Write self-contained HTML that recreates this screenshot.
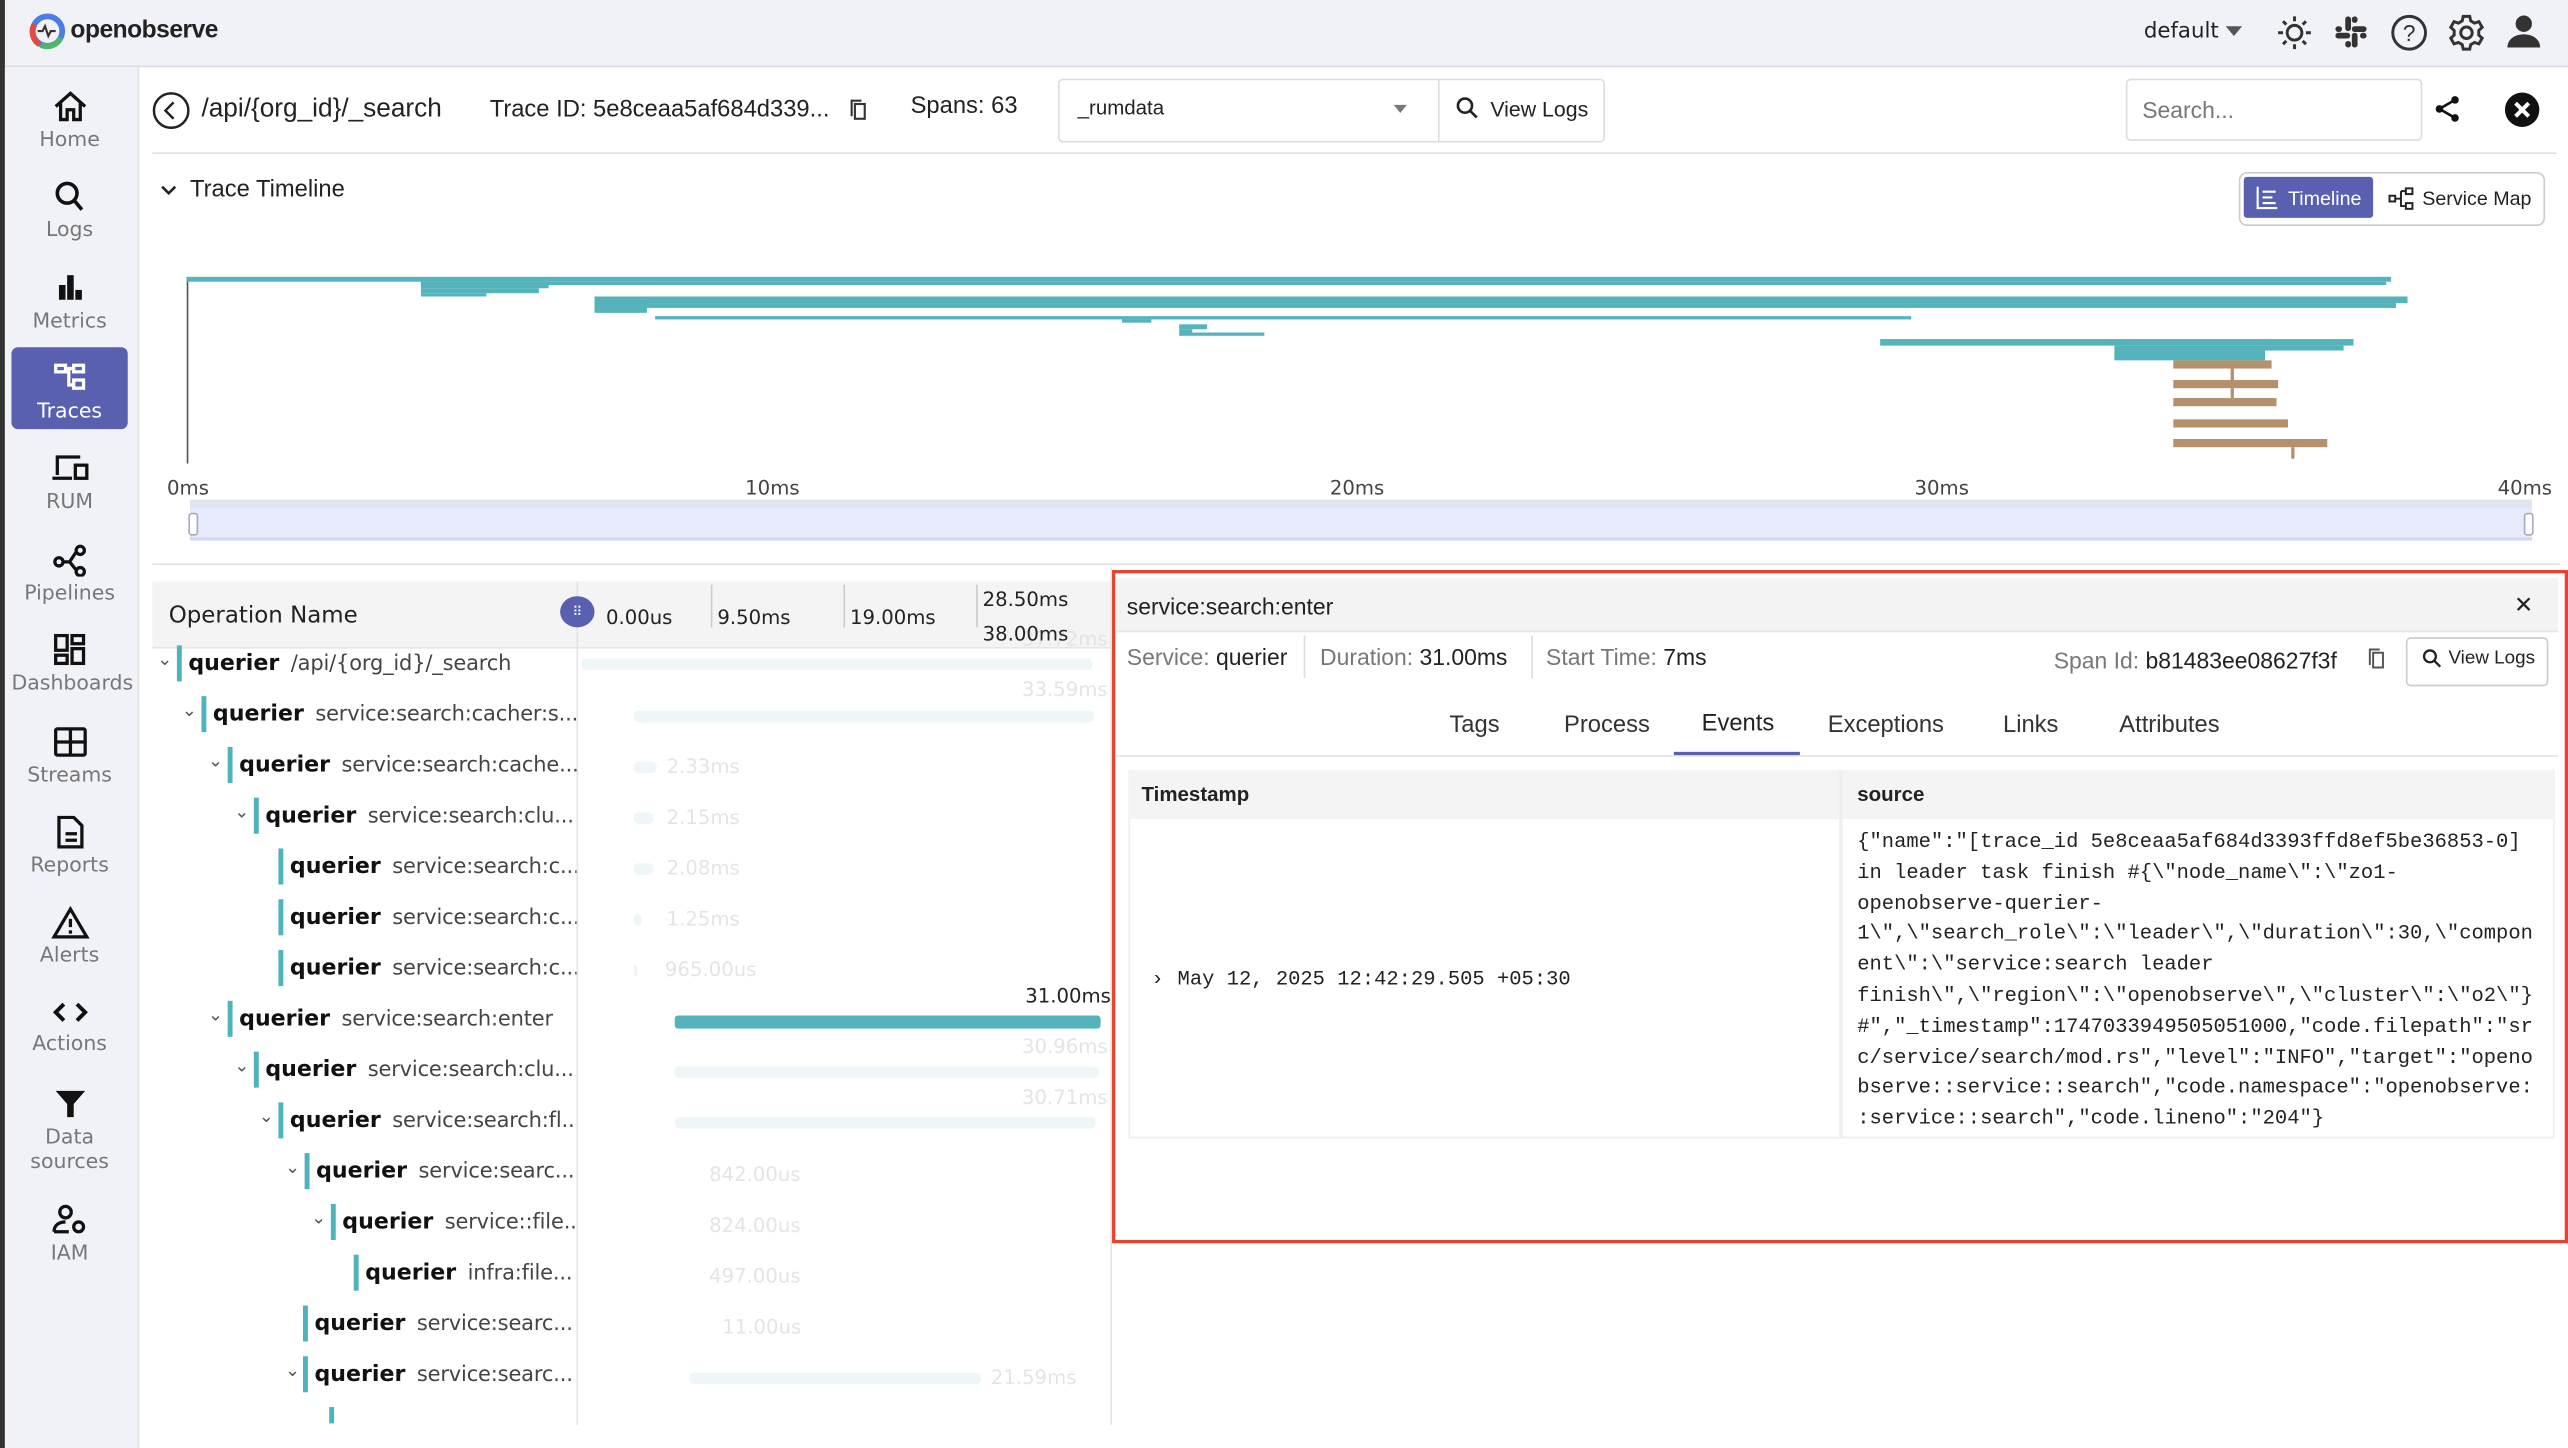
<!DOCTYPE html>
<html><head><meta charset="utf-8">
<style>
html,body{margin:0;padding:0;width:2568px;height:1448px;overflow:hidden;background:#fff}
#s{position:absolute;left:0;top:0;width:1568px;height:884px;transform:scale(1.63776,1.638);transform-origin:0 0;font-family:"Liberation Sans","DejaVu Sans",sans-serif;color:#222;background:#fff;overflow:hidden}
.a{position:absolute}
.nav{position:absolute;left:7px;width:71px;text-align:center;font-size:12.5px;color:#777;font-family:"DejaVu Sans",sans-serif}
.nav svg{display:block;margin:0 auto 2px}
.row{position:absolute;left:0;height:31px;font-size:14.5px;white-space:nowrap;overflow:hidden}
.row .b{position:absolute;top:4px;width:3px;height:22px;background:#4fb3bc}
.row .c{position:absolute;top:6px;font-size:11px;color:#555}
.row .t{position:absolute;top:7px}
.row .t b{color:#111;margin-right:7px;font-family:"DejaVu Sans",sans-serif;font-size:13.5px}
.row .t span{color:#444;font-family:"DejaVu Sans",sans-serif;font-size:12.8px;letter-spacing:-.1px}
.fb{position:absolute;height:7px;background:#eef6f7;border-radius:3px}
.fl{position:absolute;font-size:12px;color:#e4e4e4;font-family:"DejaVu Sans",sans-serif}
.g{position:absolute;background:#55b4bb}
.br{position:absolute;background:#b5906c}
</style></head><body><div id="s">
<div class="a" style="left:0;top:0;width:1568px;height:40px;background:#f1f2f7;border-bottom:1px solid #dcdde3"></div>
<div class="a" style="left:0;top:0;width:3px;height:884px;background:#333"></div>
<svg class="a" style="left:18px;top:8px" width="22" height="22" viewBox="0 0 22 22"><circle cx="11" cy="11" r="9" fill="none" stroke="#4a7de8" stroke-width="3.5"/><path d="M3 7 A9 9 0 0 0 6 19" stroke="#e54b3c" stroke-width="3.5" fill="none"/><path d="M7 19.5 A9 9 0 0 0 19 15" stroke="#4cb86a" stroke-width="3.5" fill="none"/><path d="M5 11h3l1.5-3 2 6 1.5-3h3" stroke="#333" stroke-width="1.3" fill="none"/></svg>
<div class="a" style="left:43px;top:10px;font-size:15px;font-weight:bold;color:#222;letter-spacing:-.3px">openobserve</div>
<div class="a" style="left:1309px;top:12px;font-size:13px;color:#222;font-family:'DejaVu Sans',sans-serif">default</div>
<div class="a" style="left:1359px;top:16px;width:0;height:0;border-left:5px solid transparent;border-right:5px solid transparent;border-top:6px solid #555"></div>
<svg class="a" style="left:1389px;top:8px" width="24" height="24" viewBox="0 0 24 24" stroke="#333" stroke-width="1.8" fill="none"><circle cx="12" cy="12" r="4.5"/><path d="M12 2v3M12 19v3M2 12h3M19 12h3M5 5l2 2M17 17l2 2M5 19l2-2M17 7l2-2"/></svg>
<svg class="a" style="left:1425px;top:9px" width="21" height="21" viewBox="0 0 21 21" fill="#333"><rect x="7" y="1" width="3.5" height="9" rx="1.7"/><rect x="11" y="11" width="3.5" height="9" rx="1.7"/><rect x="1" y="11" width="9" height="3.5" rx="1.7"/><rect x="11" y="7" width="9" height="3.5" rx="1.7"/><rect x="1" y="7" width="4" height="3.5" rx="1.7"/><rect x="16" y="11" width="4" height="3.5" rx="1.7"/><rect x="11" y="1" width="3.5" height="4" rx="1.7"/><rect x="7" y="16" width="3.5" height="4" rx="1.7"/></svg>
<svg class="a" style="left:1459px;top:8px" width="24" height="24" viewBox="0 0 24 24"><circle cx="12" cy="12" r="10" fill="none" stroke="#333" stroke-width="1.8"/><text x="12" y="17" text-anchor="middle" font-size="14" font-family="Liberation Sans" fill="#333">?</text></svg>
<svg class="a" style="left:1494px;top:8px" width="24" height="24" viewBox="0 0 24 24" fill="none" stroke="#333" stroke-width="1.8"><circle cx="12" cy="12" r="3.5"/><path d="M10 2h4l.6 2.8 2.3 1.3 2.7-.9 2 3.5-2.1 1.9v2.8l2.1 1.9-2 3.5-2.7-.9-2.3 1.3L14 22h-4l-.6-2.8-2.3-1.3-2.7.9-2-3.5 2.1-1.9V10.6L2.4 8.7l2-3.5 2.7.9 2.3-1.3z"/></svg>
<svg class="a" style="left:1530px;top:8px" width="22" height="22" viewBox="0 0 22 22" fill="#333"><circle cx="11" cy="6.5" r="5"/><path d="M1 21c0-5 4.5-8 10-8s10 3 10 8z"/></svg>
<div class="a" style="left:3px;top:41px;width:81px;height:843px;background:#f1f2f7;border-right:1px solid #e0e1e6"></div>
<div class="a" style="left:7px;top:212px;width:71px;height:50px;background:#5960b0;border-radius:4px"></div>
<div class="nav" style="top:55px"><svg width="22" height="20" viewBox="0 0 22 20" fill="none" stroke="#111" stroke-width="2"><path d="M2 10L11 2l9 8M5 8v10h4v-6h4v6h4V8"/></svg>Home</div>
<div class="nav" style="top:110px"><svg width="22" height="20" viewBox="0 0 22 20" fill="none" stroke="#111" stroke-width="2.2"><circle cx="9" cy="8" r="6"/><path d="M13 12l5 6"/></svg>Logs</div>
<div class="nav" style="top:166px"><svg width="22" height="20" viewBox="0 0 22 20" fill="#111"><rect x="4" y="8" width="4" height="9"/><rect x="9" y="2" width="4" height="15"/><rect x="14" y="11" width="4" height="6"/></svg>Metrics</div>
<div class="nav" style="top:221px;color:#fff"><svg width="22" height="20" viewBox="0 0 22 20" fill="none" stroke="#fff" stroke-width="2"><rect x="2" y="2" width="6" height="4"/><rect x="13" y="2" width="6" height="4"/><rect x="13" y="11" width="6" height="5"/><path d="M8 4h5M10 4v10h3"/></svg>Traces</div>
<div class="nav" style="top:276px"><svg width="26" height="20" viewBox="0 0 26 20" fill="none" stroke="#111" stroke-width="2"><path d="M5 14V3h14M2 16h12"/><rect x="16" y="8" width="7" height="8"/></svg>RUM</div>
<div class="nav" style="top:332px"><svg width="24" height="20" viewBox="0 0 24 20" fill="none" stroke="#111" stroke-width="2"><circle cx="5" cy="11" r="2.5"/><circle cx="18" cy="4" r="2.5"/><circle cx="18" cy="17" r="2.5"/><path d="M7.5 11h4l4-6M11.5 11l4 5"/></svg>Pipelines</div>
<div class="nav" style="top:387px"><svg width="22" height="20" viewBox="0 0 22 20" fill="none" stroke="#111" stroke-width="2"><rect x="2" y="1" width="7" height="9"/><rect x="12" y="1" width="7" height="5"/><rect x="2" y="13" width="7" height="5"/><rect x="12" y="9" width="7" height="9"/></svg>Dashboards</div>
<div class="nav" style="top:443px"><svg width="22" height="20" viewBox="0 0 22 20" fill="none" stroke="#111" stroke-width="2"><rect x="2" y="2" width="18" height="16" rx="1"/><path d="M11 2v16M2 10h18"/></svg>Streams</div>
<div class="nav" style="top:498px"><svg width="22" height="20" viewBox="0 0 22 20" fill="none" stroke="#111" stroke-width="2"><path d="M4 1h9l5 5v13H4z"/><path d="M8 11h7M8 15h7"/></svg>Reports</div>
<div class="nav" style="top:553px"><svg width="24" height="20" viewBox="0 0 24 20" fill="none" stroke="#111" stroke-width="2"><path d="M12 2L2 19h20z"/><path d="M12 8v5M12 15v2"/></svg>Alerts</div>
<div class="nav" style="top:609px"><svg width="24" height="18" viewBox="0 0 24 18" fill="none" stroke="#111" stroke-width="2.4"><path d="M8 4L3 9l5 5M16 4l5 5-5 5"/></svg>Actions</div>
<div class="nav" style="top:664px;line-height:15px"><svg width="22" height="20" viewBox="0 0 22 20" fill="#111"><path d="M2 2h18l-7 8v8h-4v-8z"/></svg>Data<br>sources</div>
<div class="nav" style="top:735px"><svg width="24" height="20" viewBox="0 0 24 20" fill="none" stroke="#111" stroke-width="2"><circle cx="9" cy="5" r="3.5"/><path d="M2 17c0-4 3-6 7-6M2 17h9"/><circle cx="17" cy="14" r="3"/></svg>IAM</div>
<svg class="a" style="left:93px;top:56px" width="23" height="23" viewBox="0 0 23 23" fill="none" stroke="#222" stroke-width="1.5"><circle cx="11.5" cy="11.5" r="10.5"/><path d="M13 6.5l-5 5 5 5"/></svg>
<div class="a" style="left:123px;top:58px;font-size:16px;color:#222">/api/{org_id}/_search</div>
<div class="a" style="left:299px;top:59px;font-size:14.5px;color:#222">Trace ID: 5e8ceaa5af684d339...</div>
<svg class="a" style="left:518px;top:60px" width="12" height="14" viewBox="0 0 12 14" fill="none" stroke="#333" stroke-width="1.3"><rect x="4" y="3.5" width="6" height="9"/><path d="M2 11V1.5h6"/></svg>
<div class="a" style="left:556px;top:57px;font-size:14.5px;color:#222">Spans: 63</div>
<div class="a" style="left:646px;top:48px;width:332px;height:37px;border:1px solid #ddd;border-radius:3px"></div>
<div class="a" style="left:878px;top:48px;width:1px;height:39px;background:#ddd"></div>
<div class="a" style="left:658px;top:59px;font-size:12.5px;color:#222">_rumdata</div>
<div class="a" style="left:851px;top:64px;width:0;height:0;border-left:4.5px solid transparent;border-right:4.5px solid transparent;border-top:5px solid #777"></div>
<svg class="a" style="left:889px;top:59px" width="14" height="14" viewBox="0 0 14 14" fill="none" stroke="#222" stroke-width="1.6"><circle cx="5.5" cy="5.5" r="4.3"/><path d="M8.7 8.7l4 4"/></svg>
<div class="a" style="left:910px;top:59px;font-size:13px;color:#222">View Logs</div>
<div class="a" style="left:1298px;top:48px;width:179px;height:36px;border:1px solid #ddd;border-radius:3px"></div>
<div class="a" style="left:1308px;top:59px;font-size:14px;color:#777">Search...</div>
<svg class="a" style="left:1486px;top:58px" width="17" height="17" viewBox="0 0 17 17" fill="#111"><circle cx="13" cy="3" r="2.3"/><circle cx="3.5" cy="8.5" r="2.3"/><circle cx="13" cy="14" r="2.3"/><path d="M3.5 8.5L13 3M3.5 8.5L13 14" stroke="#111" stroke-width="1.6"/></svg>
<svg class="a" style="left:1529px;top:56px" width="22" height="22" viewBox="0 0 22 22"><circle cx="11" cy="11" r="10.5" fill="#111"/><path d="M7 7l8 8M15 7l-8 8" stroke="#fff" stroke-width="2.4"/></svg>
<div class="a" style="left:93px;top:93px;width:1468px;height:1px;background:#e2e2e2"></div>
<svg class="a" style="left:97px;top:111px" width="12" height="10" viewBox="0 0 12 10" fill="none" stroke="#222" stroke-width="1.6"><path d="M2 3l4 4 4-4"/></svg>
<div class="a" style="left:116px;top:108px;font-size:14.5px;color:#222">Trace Timeline</div>
<div class="a" style="left:1367px;top:105px;width:185px;height:31px;border:1px solid #ccc;border-radius:5px"></div>
<div class="a" style="left:1370px;top:108px;width:79px;height:25px;background:#5960b0;border-radius:2px"></div>
<svg class="a" style="left:1377px;top:113px" width="15" height="15" viewBox="0 0 15 15" fill="none" stroke="#fff" stroke-width="1.3"><path d="M1.5 1v13h12M4.5 4h8M4.5 7.5h6M4.5 11h8"/></svg>
<div class="a" style="left:1397px;top:114px;font-size:12px;color:#fff">Timeline</div>
<svg class="a" style="left:1458px;top:114px" width="17" height="15" viewBox="0 0 17 15" fill="none" stroke="#222" stroke-width="1.2"><rect x="1" y="5.5" width="3.5" height="3.5"/><rect x="11" y="1" width="4" height="3.5"/><rect x="11" y="10" width="4" height="3.5"/><path d="M4.5 7.3h3.5M8 2.7v9.5M8 2.7h3M8 11.8h3"/></svg>
<div class="a" style="left:1479px;top:114px;font-size:12px;color:#222">Service Map</div>
<div class="a" style="left:114px;top:169px;width:1px;height:114px;background:#555"></div>
<div class="g" style="left:114px;top:169px;width:1346px;height:3px"></div>
<div class="g" style="left:257px;top:172px;width:1200px;height:2px"></div>
<div class="g" style="left:257px;top:172px;width:78px;height:4px"></div>
<div class="g" style="left:257px;top:176px;width:72px;height:3px"></div>
<div class="g" style="left:257px;top:179px;width:40px;height:2px"></div>
<div class="g" style="left:363px;top:181px;width:1107px;height:4px"></div>
<div class="g" style="left:363px;top:185px;width:1100px;height:3px"></div>
<div class="g" style="left:363px;top:185px;width:32px;height:6px"></div>
<div class="g" style="left:400px;top:193px;width:767px;height:2px"></div>
<div class="g" style="left:685px;top:195px;width:18px;height:2px"></div>
<div class="g" style="left:720px;top:198px;width:17px;height:3px"></div>
<div class="g" style="left:720px;top:201px;width:8px;height:2px"></div>
<div class="g" style="left:720px;top:203px;width:52px;height:2px"></div>
<div class="g" style="left:1148px;top:207px;width:289px;height:4px"></div>
<div class="g" style="left:1291px;top:211px;width:140px;height:3px"></div>
<div class="g" style="left:1291px;top:214px;width:92px;height:6px"></div>
<div class="br" style="left:1327px;top:220px;width:60px;height:5px"></div>
<div class="br" style="left:1362px;top:225px;width:2px;height:7px"></div>
<div class="br" style="left:1327px;top:232px;width:64px;height:5px"></div>
<div class="br" style="left:1362px;top:237px;width:2px;height:6px"></div>
<div class="br" style="left:1327px;top:243px;width:63px;height:5px"></div>
<div class="br" style="left:1327px;top:256px;width:70px;height:5px"></div>
<div class="br" style="left:1327px;top:268px;width:94px;height:5px"></div>
<div class="br" style="left:1399px;top:273px;width:2px;height:7px"></div>
<div class="a" style="left:102px;top:291px;font-size:12px;color:#444;font-family:'DejaVu Sans',sans-serif">0ms</div>
<div class="a" style="left:455px;top:291px;font-size:12px;color:#444;font-family:'DejaVu Sans',sans-serif">10ms</div>
<div class="a" style="left:812px;top:291px;font-size:12px;color:#444;font-family:'DejaVu Sans',sans-serif">20ms</div>
<div class="a" style="left:1169px;top:291px;font-size:12px;color:#444;font-family:'DejaVu Sans',sans-serif">30ms</div>
<div class="a" style="left:1525px;top:291px;font-size:12px;color:#444;font-family:'DejaVu Sans',sans-serif">40ms</div>
<div class="a" style="left:116px;top:305px;width:1430px;height:25px;background:#e6eafb;border-top:5px solid #e0e4ef;box-sizing:border-box;border-bottom:2px solid #d4d9f3"></div>
<div class="a" style="left:115px;top:313px;width:4px;height:12px;border:1px solid #aab;border-radius:2px;background:#fff"></div>
<div class="a" style="left:1541px;top:313px;width:4px;height:12px;border:1px solid #aab;border-radius:2px;background:#fff"></div>
<div class="a" style="left:93px;top:344px;width:1470px;height:1px;background:#e2e2e2"></div>
<div class="a" style="left:93px;top:355px;width:587px;height:40px;background:#f4f4f4;border-bottom:1px solid #e6e6e6"></div>
<div class="a" style="left:352px;top:355px;width:1px;height:515px;background:#e4e4e4"></div>
<div class="a" style="left:103px;top:368px;font-size:14px;color:#222;font-family:'DejaVu Sans',sans-serif">Operation Name</div>
<div class="a" style="left:342px;top:364px;width:21px;height:19px;border-radius:50%;background:#5960b0;color:#fff;font-size:8px;text-align:center;line-height:19px">⠿</div>
<div class="a" style="left:434px;top:357px;width:1px;height:26px;background:#ccc"></div>
<div class="a" style="left:515px;top:357px;width:1px;height:26px;background:#ccc"></div>
<div class="a" style="left:596px;top:357px;width:1px;height:26px;background:#ccc"></div>
<div class="a" style="left:370px;top:370px;font-size:12px;color:#222;font-family:'DejaVu Sans',sans-serif">0.00us</div>
<div class="a" style="left:438px;top:370px;font-size:12px;color:#222;font-family:'DejaVu Sans',sans-serif">9.50ms</div>
<div class="a" style="left:519px;top:370px;font-size:12px;color:#222;font-family:'DejaVu Sans',sans-serif">19.00ms</div>
<div class="a" style="left:600px;top:359px;font-size:12px;color:#222;font-family:'DejaVu Sans',sans-serif">28.50ms</div>
<!-- rows -->
<div class="row" style="top:390px;width:352px"><span class="c" style="left:96px">⌄</span><div class="b" style="left:108px"></div><div class="t" style="left:115px"><b>querier</b><span>/api/{org_id}/_search</span></div></div>
<div class="row" style="top:421px;width:352px"><span class="c" style="left:111px">⌄</span><div class="b" style="left:123px"></div><div class="t" style="left:130px"><b>querier</b><span>service:search:cacher:s...</span></div></div>
<div class="row" style="top:452px;width:352px"><span class="c" style="left:127px">⌄</span><div class="b" style="left:139px"></div><div class="t" style="left:146px"><b>querier</b><span>service:search:cache...</span></div></div>
<div class="row" style="top:483px;width:352px"><span class="c" style="left:143px">⌄</span><div class="b" style="left:155px"></div><div class="t" style="left:162px"><b>querier</b><span>service:search:clu...</span></div></div>
<div class="row" style="top:514px;width:352px"><div class="b" style="left:170px"></div><div class="t" style="left:177px"><b>querier</b><span>service:search:c...</span></div></div>
<div class="row" style="top:545px;width:352px"><div class="b" style="left:170px"></div><div class="t" style="left:177px"><b>querier</b><span>service:search:c...</span></div></div>
<div class="row" style="top:576px;width:352px"><div class="b" style="left:170px"></div><div class="t" style="left:177px"><b>querier</b><span>service:search:c...</span></div></div>
<div class="row" style="top:607px;width:352px"><span class="c" style="left:127px">⌄</span><div class="b" style="left:139px"></div><div class="t" style="left:146px"><b>querier</b><span>service:search:enter</span></div></div>
<div class="row" style="top:638px;width:352px"><span class="c" style="left:143px">⌄</span><div class="b" style="left:155px"></div><div class="t" style="left:162px"><b>querier</b><span>service:search:clu...</span></div></div>
<div class="row" style="top:669px;width:352px"><span class="c" style="left:158px">⌄</span><div class="b" style="left:170px"></div><div class="t" style="left:177px"><b>querier</b><span>service:search:fl...</span></div></div>
<div class="row" style="top:700px;width:352px"><span class="c" style="left:174px">⌄</span><div class="b" style="left:186px"></div><div class="t" style="left:193px"><b>querier</b><span>service:searc...</span></div></div>
<div class="row" style="top:731px;width:352px"><span class="c" style="left:190px">⌄</span><div class="b" style="left:202px"></div><div class="t" style="left:209px"><b>querier</b><span>service::file...</span></div></div>
<div class="row" style="top:762px;width:352px"><div class="b" style="left:216px"></div><div class="t" style="left:223px"><b>querier</b><span>infra:file...</span></div></div>
<div class="row" style="top:793px;width:352px"><div class="b" style="left:185px"></div><div class="t" style="left:192px"><b>querier</b><span>service:searc...</span></div></div>
<div class="row" style="top:824px;width:352px"><span class="c" style="left:174px">⌄</span><div class="b" style="left:185px"></div><div class="t" style="left:192px"><b>querier</b><span>service:searc...</span></div></div>
<div class="row" style="top:855px;width:352px;height:14px"><div class="b" style="left:201px"></div></div>
<!-- right timeline bars -->
<div class="fb" style="left:355px;top:402px;width:312px"></div><div class="fl" style="left:624px;top:383px">37.72ms</div>
<div class="a" style="left:600px;top:380px;font-size:12px;color:#222;font-family:'DejaVu Sans',sans-serif">38.00ms</div>
<div class="fb" style="left:387px;top:434px;width:281px"></div><div class="fl" style="left:624px;top:414px">33.59ms</div>
<div class="fb" style="left:387px;top:465px;width:14px"></div><div class="fl" style="left:407px;top:461px">2.33ms</div>
<div class="fb" style="left:387px;top:496px;width:12px"></div><div class="fl" style="left:407px;top:492px">2.15ms</div>
<div class="fb" style="left:387px;top:527px;width:12px"></div><div class="fl" style="left:407px;top:523px">2.08ms</div>
<div class="fb" style="left:387px;top:558px;width:5px"></div><div class="fl" style="left:407px;top:554px">1.25ms</div>
<div class="fb" style="left:387px;top:589px;width:2px"></div><div class="fl" style="left:406px;top:585px">965.00us</div>
<div class="a" style="left:412px;top:620px;width:260px;height:8px;background:#55b4bb;border-radius:2px"></div><div class="a" style="left:626px;top:601px;font-size:12px;color:#222;font-family:'DejaVu Sans',sans-serif">31.00ms</div>
<div class="fb" style="left:412px;top:651px;width:259px"></div><div class="fl" style="left:624px;top:632px">30.96ms</div>
<div class="fb" style="left:412px;top:682px;width:257px"></div><div class="fl" style="left:624px;top:663px">30.71ms</div>
<div class="fl" style="left:433px;top:710px">842.00us</div>
<div class="fl" style="left:433px;top:741px">824.00us</div>
<div class="fl" style="left:433px;top:772px">497.00us</div>
<div class="fl" style="left:441px;top:803px">11.00us</div>
<div class="fb" style="left:421px;top:838px;width:178px"></div><div class="fl" style="left:605px;top:834px">21.59ms</div>
<!-- detail panel -->
<div class="a" style="left:678px;top:347px;width:1px;height:523px;background:#e4e4e4"></div>
<div class="a" style="left:679px;top:348px;width:885px;height:407px;border:2px solid #e8412e;background:#fff"></div>
<div class="a" style="left:681px;top:353px;width:881px;height:32px;background:#f3f3f3;border-bottom:1px solid #e4e4e4"></div>
<div class="a" style="left:688px;top:362px;font-size:14px;color:#222">service:search:enter</div>
<div class="a" style="left:1535px;top:361px;font-size:14px;color:#222">✕</div>
<div class="a" style="left:688px;top:393px;font-size:14px;color:#777">Service: <span style="color:#222">querier</span></div>
<div class="a" style="left:796px;top:388px;width:1px;height:26px;background:#ddd"></div>
<div class="a" style="left:806px;top:393px;font-size:14px;color:#777">Duration: <span style="color:#222">31.00ms</span></div>
<div class="a" style="left:935px;top:388px;width:1px;height:26px;background:#ddd"></div>
<div class="a" style="left:944px;top:393px;font-size:14px;color:#777">Start Time: <span style="color:#222">7ms</span></div>
<div class="a" style="left:1254px;top:395px;font-size:14px;color:#777">Span Id: <span style="color:#222">b81483ee08627f3f</span></div>
<svg class="a" style="left:1445px;top:395px" width="12" height="14" viewBox="0 0 12 14" fill="none" stroke="#555" stroke-width="1.2"><rect x="4" y="3.5" width="6" height="9"/><path d="M2 11V1.5h6"/></svg>
<div class="a" style="left:1469px;top:389px;width:85px;height:28px;border:1px solid #ccc;border-radius:3px"></div>
<svg class="a" style="left:1479px;top:396px" width="12" height="12" viewBox="0 0 12 12" fill="none" stroke="#222" stroke-width="1.4"><circle cx="4.7" cy="4.7" r="3.6"/><path d="M7.4 7.4l3.6 3.6"/></svg>
<div class="a" style="left:1495px;top:396px;font-size:11.5px;color:#222">View Logs</div>
<div class="a" style="left:885px;top:435px;font-size:14.5px;color:#333">Tags</div>
<div class="a" style="left:955px;top:435px;font-size:14.5px;color:#333">Process</div>
<div class="a" style="left:1039px;top:434px;font-size:14.5px;color:#222">Events</div>
<div class="a" style="left:1116px;top:435px;font-size:14.5px;color:#333">Exceptions</div>
<div class="a" style="left:1223px;top:435px;font-size:14.5px;color:#333">Links</div>
<div class="a" style="left:1294px;top:435px;font-size:14.5px;color:#333">Attributes</div>
<div class="a" style="left:681px;top:461px;width:881px;height:1px;background:#e4e4e4"></div>
<div class="a" style="left:1022px;top:459px;width:77px;height:2px;background:#5960b0"></div>
<div class="a" style="left:689px;top:470px;width:871px;height:225px;border:1px solid #eee;box-sizing:border-box"></div>
<div class="a" style="left:689px;top:470px;width:871px;height:30px;background:#f4f4f4"></div>
<div class="a" style="left:1123px;top:470px;width:2px;height:225px;background:#eee"></div>
<div class="a" style="left:697px;top:478px;font-size:12.5px;font-weight:bold;color:#222">Timestamp</div>
<div class="a" style="left:1134px;top:478px;font-size:12.5px;font-weight:bold;color:#222">source</div>
<div class="a" style="left:703px;top:591px;font-size:12.5px;color:#222;font-family:'Liberation Mono',monospace">›</div>
<div class="a" style="left:719px;top:591px;font-size:12.5px;color:#222;font-family:'Liberation Mono',monospace">May 12, 2025 12:42:29.505 +05:30</div>
<div class="a" style="left:1134px;top:505px;width:416px;font-size:12.5px;line-height:18.8px;color:#222;font-family:'Liberation Mono',monospace;word-break:break-all;white-space:pre-line">{"name":"[trace_id 5e8ceaa5af684d3393ffd8ef5be36853-0]
in leader task finish #{\"node_name\":\"zo1-
openobserve-querier-
1\",\"search_role\":\"leader\",\"duration\":30,\"compon
ent\":\"service:search leader
finish\",\"region\":\"openobserve\",\"cluster\":\"o2\"}
#","_timestamp":1747033949505051000,"code.filepath":"sr
c/service/search/mod.rs","level":"INFO","target":"openo
bserve::service::search","code.namespace":"openobserve:
:service::search","code.lineno":"204"}</div>
</div></body></html>
